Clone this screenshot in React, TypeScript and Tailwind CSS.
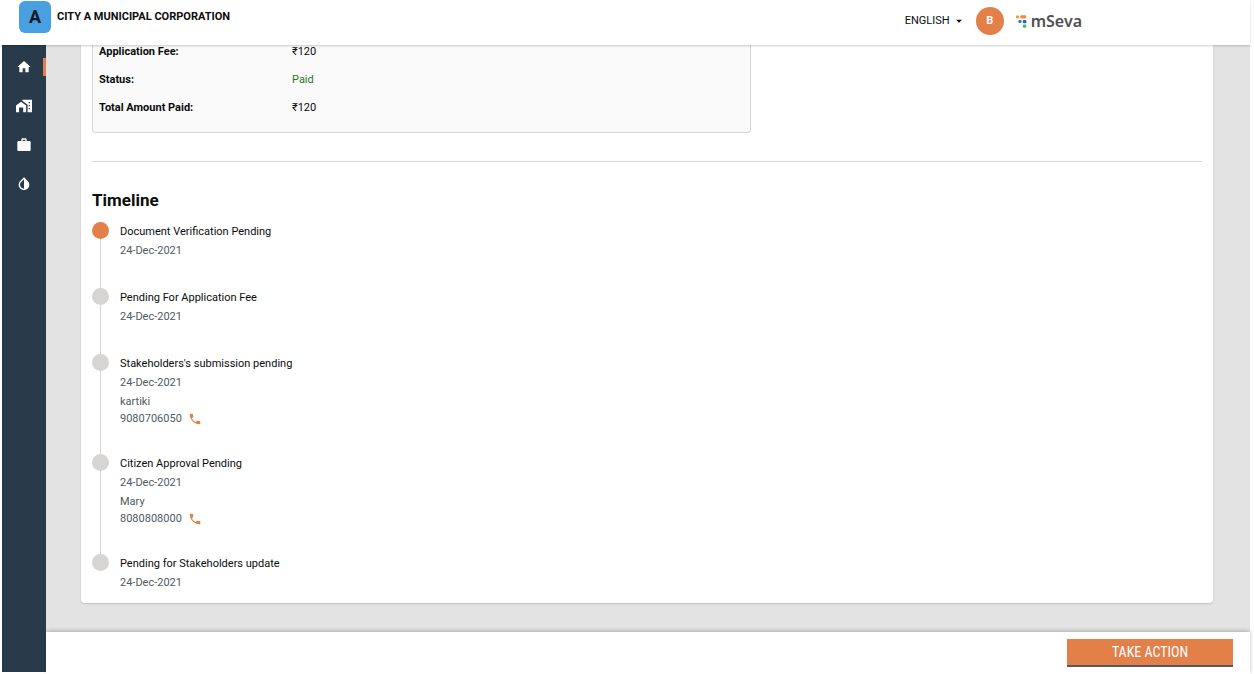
import { MdArrowDropDown, MdHome, MdInvertColors, MdPhone, MdWork } from "react-icons/md";
import type { ComponentType } from "react";
import clsx from "clsx";

interface TimelineEntry {
    status: string;
    date: string;
    person?: string;
    phone?: string;
}

// house in front of a taller block with small windows
function PropertyIcon({ className }: { className?: string }) {
    return (
        <svg viewBox="0 0 24 24" className={className} fill="currentColor" aria-hidden="true">
            <path d="M0 21.5V11.2L7.6 5.6l7.6 5.6v10.3h-4.4v-7.2H4.6v7.2z" />
            <path d="M9.5 2.5H24v19h-6.6V10L9.5 4.2zM19 6v2h2V6zm0 4.5v2h2v-2zm0 4.5v2h2v-2z" />
        </svg>
    );
}

const navItems: { label: string; icon: ComponentType<{ className?: string }>; active?: boolean }[] = [
    { label: "Home", icon: MdHome, active: true },
    { label: "Property", icon: PropertyIcon },
    { label: "Licences", icon: MdWork },
    { label: "Water", icon: MdInvertColors },
];

const fees = [
    { label: "Application Fee:", value: "₹120" },
    { label: "Status:", value: "Paid", paid: true },
    { label: "Total Amount Paid:", value: "₹120" },
];

const timeline: TimelineEntry[] = [
    { status: "Document Verification Pending", date: "24-Dec-2021" },
    { status: "Pending For Application Fee", date: "24-Dec-2021" },
    {
        status: "Stakeholders's submission pending",
        date: "24-Dec-2021",
        person: "kartiki",
        phone: "9080706050",
    },
    {
        status: "Citizen Approval Pending",
        date: "24-Dec-2021",
        person: "Mary",
        phone: "8080808000",
    },
    { status: "Pending for Stakeholders update", date: "24-Dec-2021" },
];

function MSevaLogo() {
    return (
        <a href="#mseva" className="flex items-center gap-1">
            <svg viewBox="0 0 11 13" className="h-[13px] w-[11px]" aria-hidden="true">
                <rect x="0" y="0.4" width="3" height="3" rx="0.8" fill="#ee9a3e" />
                <rect x="4.4" y="0.2" width="5.8" height="3.4" rx="0.8" fill="#ee8a32" />
                <rect x="2.4" y="4.9" width="3.2" height="3.2" rx="1" fill="#2f7fd0" />
                <rect x="6.8" y="4.9" width="3.6" height="3.4" rx="1" fill="#2469b8" />
                <rect x="6.9" y="9.5" width="3.3" height="3.3" rx="1" fill="#4fb566" />
            </svg>
            <span className="font-['Noto_Sans',sans-serif] text-base leading-5 font-semibold text-[#505050]">
                mSeva
            </span>
        </a>
    );
}

function Header() {
    return (
        <header className="relative z-20 flex h-[45px] items-start justify-between bg-white pt-px pr-[168px] pl-[19px] shadow-[0_1px_2px_rgba(0,0,0,0.2)]">
            <div className="flex items-center gap-1.5">
                <div className="flex size-8 items-center justify-center rounded-md bg-[#489fe2] text-lg font-bold text-[#101820]">
                    A
                </div>
                <h1 className="text-[11px] font-bold">CITY A MUNICIPAL CORPORATION</h1>
            </div>
            <div className="flex h-10 items-center">
                <select
                    aria-label="Language"
                    className="appearance-none bg-transparent text-[11px]"
                    defaultValue="en"
                >
                    <option value="en">ENGLISH</option>
                </select>
                <MdArrowDropDown className="pointer-events-none ml-0.5 size-3.5" />
                <button
                    type="button"
                    className="mr-3 ml-2.5 size-7 rounded-full bg-[#e3804a] text-[11px] font-bold text-white"
                >
                    B
                </button>
                <MSevaLogo />
            </div>
        </header>
    );
}

function Sidebar() {
    return (
        <nav className="z-10 mb-0.5 ml-0.5 w-11 shrink-0 bg-[#293a4b] pt-[13px]">
            <ul className="space-y-[21px]">
                {navItems.map(({ label, icon: Icon, active }) => (
                    <li key={label}>
                        <a
                            href={`#${label.toLowerCase()}`}
                            aria-label={label}
                            className={clsx(
                                "flex h-[18px] items-center justify-center border-r-3 border-l-3 border-l-transparent text-white",
                                active ? "border-r-[#e3804a]" : "border-r-transparent",
                            )}
                        >
                            <Icon className="size-4" />
                        </a>
                    </li>
                ))}
            </ul>
        </nav>
    );
}

function TimelineItem({ entry, current, last }: { entry: TimelineEntry; current: boolean; last: boolean }) {
    return (
        <li className="flex gap-[11px]">
            <div className="flex w-[17px] flex-col items-center">
                <span
                    className={clsx("size-[17px] rounded-full", current ? "bg-[#e3804a]" : "bg-[#d6d5d4]")}
                />
                {/* connector runs down to the next dot */}
                {!last && <span className="w-px flex-1 bg-[#d6d5d4]" />}
            </div>
            <div className={clsx("text-[11px] leading-[18px] text-[#505a5f]", !last && "pb-[27px]")}>
                <h3 className="leading-[19px] text-[#0b0c0c]">{entry.status}</h3>
                <p className="leading-5">{entry.date}</p>
                {entry.person && <p>{entry.person}</p>}
                {entry.phone && (
                    <a href={`tel:${entry.phone}`} className="flex items-center gap-1.5 leading-4">
                        {entry.phone}
                        <MdPhone className="size-3.5 text-[#e3804a]" />
                    </a>
                )}
            </div>
        </li>
    );
}

export default function App() {
    return (
        <div className="flex min-h-screen flex-col bg-white pr-1 font-[Roboto,sans-serif] text-[#0b0c0c]">
            <Header />
            <div className="flex flex-1">
                <Sidebar />
                <div className="flex min-w-0 flex-1 flex-col">
                    <main className="flex-1 bg-[#e3e3e3] pr-[37px] pb-7 pl-[35px]">
                        <section className="rounded-b-sm bg-white px-[11px] pb-2.5 shadow-[0_1px_2px_rgba(0,0,0,0.16)]">
                            <dl className="w-3/5 max-w-[659px] space-y-4 rounded-b-sm border border-t-0 border-[#d6d5d4] bg-[#fafafa] px-1.5 pt-px pb-[18px] text-[11px] leading-3">
                                {fees.map((fee) => (
                                    <div key={fee.label} className="flex">
                                        <dt className="w-[193px] font-bold">{fee.label}</dt>
                                        <dd className={clsx(fee.paid && "text-[#2c7420]")}>{fee.value}</dd>
                                    </div>
                                ))}
                            </dl>
                            <hr className="mt-7 border-[#d6d5d4]" />
                            <h2 className="mt-[26px] mb-2.5 text-[17px] leading-6 font-bold">Timeline</h2>
                            <ol>
                                {timeline.map((entry, i) => (
                                    <TimelineItem
                                        key={entry.status}
                                        entry={entry}
                                        current={i === 0}
                                        last={i === timeline.length - 1}
                                    />
                                ))}
                            </ol>
                        </section>
                    </main>
                    <footer className="flex h-[42px] items-start justify-end bg-white pt-[7px] pr-[17px] shadow-[0_-1px_4px_rgba(0,0,0,0.25)]">
                        <button
                            type="button"
                            className="h-7 w-[166px] border-b-2 border-[#505a5f] bg-[#e3804a] font-['Roboto_Condensed',Roboto,sans-serif] text-sm text-white"
                        >
                            TAKE ACTION
                        </button>
                    </footer>
                </div>
            </div>
        </div>
    );
}
